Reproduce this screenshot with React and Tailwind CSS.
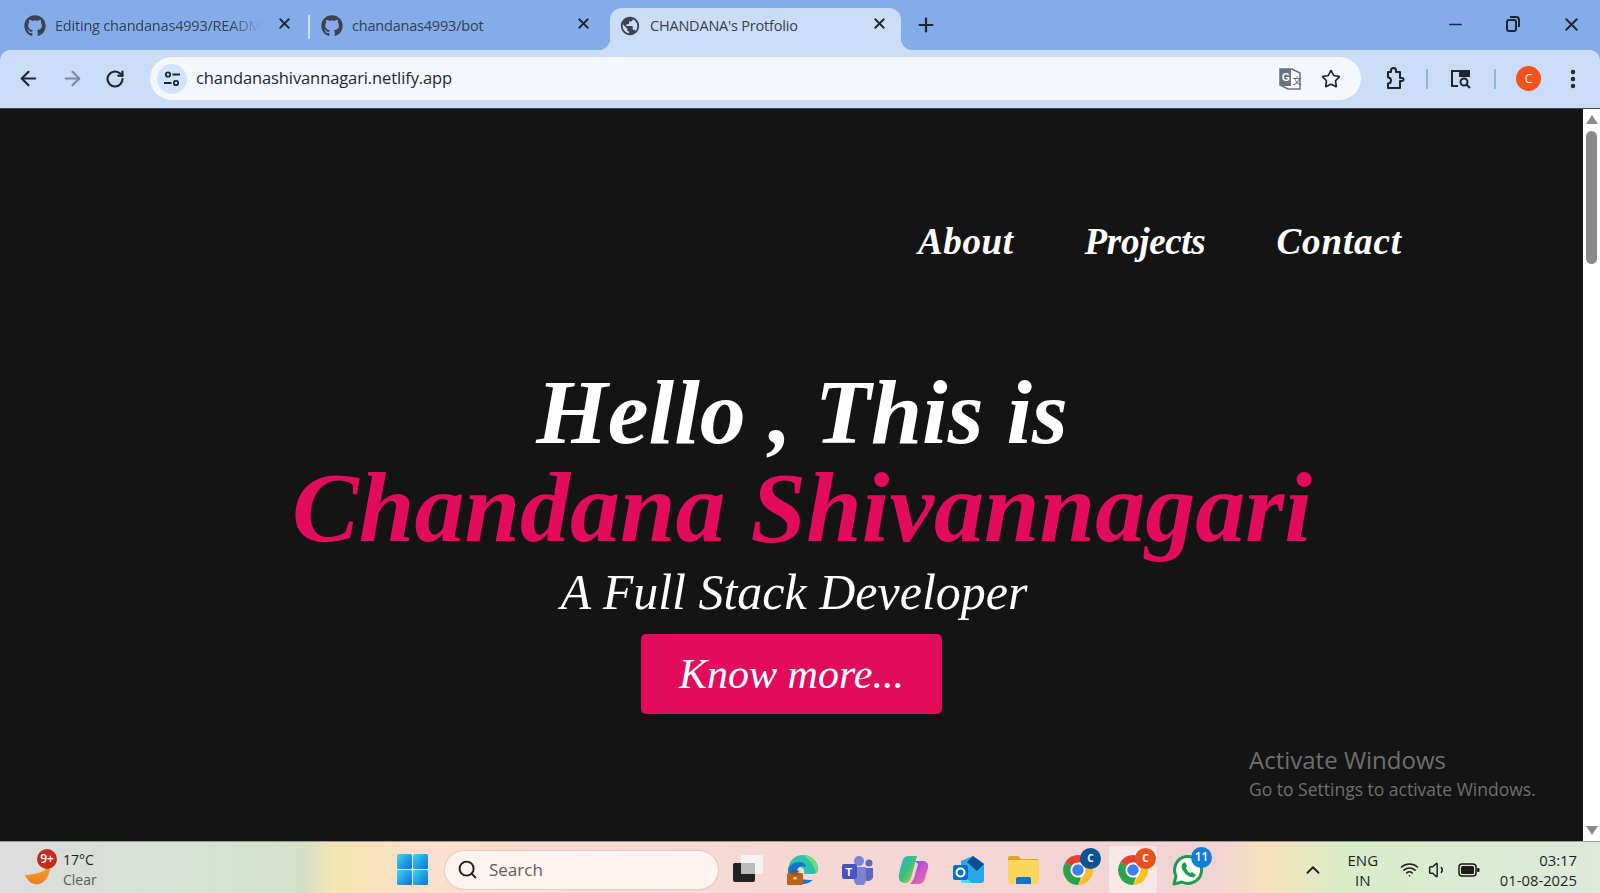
import React from "react";
import { FaGithub } from "react-icons/fa";
import { MdPublic } from "react-icons/md";
import {
  ArrowLeft,
  ArrowRight,
  ChevronUp,
  EllipsisVertical,
  Minus,
  Plus,
  RotateCw,
  Search,
  Star,
  Volume1,
  Wifi,
  X,
} from "lucide-react";

const Tab = ({ icon, title, active, fade, className }) => (
  <div
    className={`relative flex h-[42px] shrink-0 items-center pb-[6px] ${className} ${
      active ? "rounded-t-[12px] bg-[#cbdcf7]" : ""
    }`}
  >
    {active && (
      <>
        <span className="absolute bottom-0 left-[-12px] h-3 w-3 bg-[radial-gradient(circle_at_0_0,transparent_12px,#cbdcf7_12.5px)]" />
        <span className="absolute bottom-0 right-[-12px] h-3 w-3 bg-[radial-gradient(circle_at_100%_0,transparent_12px,#cbdcf7_12.5px)]" />
      </>
    )}
    <span className="flex w-[31px] shrink-0 justify-start text-[#3b4350]">{icon}</span>
    <span
      className={`w-[206px] overflow-hidden whitespace-nowrap text-[14.5px] tracking-[-0.2px] text-[#37404d] ${
        fade ? "[mask-image:linear-gradient(90deg,#000_85%,transparent)]" : ""
      }`}
    >
      {title}
    </span>
    <X className="absolute right-[13px] top-[7px] h-[17px] w-[17px] text-[#20262e]" strokeWidth={2.6} />
  </div>
);

const ExtensionIcon = () => (
  <svg width="24" height="24" viewBox="0 0 24 24" fill="none" stroke="#1f2530" strokeWidth="2">
    <path d="M6 5h3V3.500a2.500 2.500 0 0 1 5 0V5h4v6h2a1.500 1.500 0 0 1 0 3h-2v7H6v-4.500a3 3 0 0 0 0-6z" strokeLinejoin="round" />
  </svg>
);

const SidePanelIcon = () => (
  <svg width="24" height="24" viewBox="0 0 24 24" fill="none" stroke="#1f2530" strokeWidth="2">
    <path d="M10 19H4V4h17v6" />
    <rect x="12" y="4" width="9" height="5" fill="#1f2530" />
    <circle cx="16" cy="15" r="3.500" />
    <path d="M18.500 17.500L22 21" />
  </svg>
);

const TranslateIcon = () => (
  <svg width="24" height="24" viewBox="0 0 24 24">
    <path d="M2 2h12l8 4v16H10L2 18z" fill="#fff" stroke="#6b7280" strokeWidth="1.500" />
    <path d="M2 2h11v17H2z" fill="#6b7280" />
    <text x="4" y="14" fontSize="10" fontWeight="700" fill="#fff" fontFamily="Liberation Sans, sans-serif">G</text>
    <text x="14.500" y="17" fontSize="9" fill="#4b5563" fontFamily="Noto Sans CJK SC, sans-serif">文</text>
  </svg>
);

const WindowsLogo = () => (
  <svg width="31" height="31" viewBox="0 0 31 31">
    <defs>
      <linearGradient id="win" x1="0" y1="0" x2="1" y2="1">
        <stop offset="0" stopColor="#3fd0f5" />
        <stop offset="1" stopColor="#0a74cf" />
      </linearGradient>
    </defs>
    <rect x="0" y="0" width="15" height="15" rx="1.500" fill="url(#win)" />
    <rect x="16" y="0" width="15" height="15" rx="1.500" fill="url(#win)" />
    <rect x="0" y="16" width="15" height="15" rx="1.500" fill="url(#win)" />
    <rect x="16" y="16" width="15" height="15" rx="1.500" fill="url(#win)" />
  </svg>
);

const TaskView = () => (
  <svg width="31" height="30" viewBox="0 0 31 30">
    <rect x="8" y="0" width="22" height="19" rx="2" fill="#f4f4f4" />
    <rect x="0" y="8" width="22" height="19" rx="2" fill="#222" />
    <rect x="8" y="8" width="14" height="11" fill="#bcbcbc" />
  </svg>
);

const Edge = () => (
  <svg width="32" height="32" viewBox="0 0 32 32">
    <path d="M1 17C1 7 8 1 16 1c8 0 15 6 15 14 0 3-2 5-6 5h-8c1-4-1-7-5-7-6 0-9 4-11 4z" fill="#2fc0b0" />
    <path d="M16 1c8 0 15 6 15 14 0 2-1 3-2 4-1-7-6-13-13-18z" fill="#6fdc72" />
    <path d="M1 17c0-5 5-9 11-9 4 0 7 2 7 5-6-2-9 1-9 5 0 5 5 8 12 8 3 0 4 0 5-1-3 3-7 5-11 5C8 30 1 25 1 17z" fill="#1276c9" />
    <rect x="0" y="19" width="16" height="12" rx="1.500" fill="#b8651a" />
    <rect x="5" y="17" width="6" height="3" fill="none" stroke="#8a4a12" strokeWidth="1.200" />
    <rect x="6.500" y="23" width="3" height="2.500" fill="#f6d188" />
  </svg>
);

const Teams = () => (
  <svg width="32" height="30" viewBox="0 0 32 30">
    <circle cx="17" cy="6" r="5" fill="#7b83d6" />
    <circle cx="27" cy="8" r="3.500" fill="#5f66bd" />
    <path d="M23 13h8v9a5 5 0 0 1-8 3z" fill="#5f66bd" />
    <path d="M9 12h15v12a6 6 0 0 1-12 2z" fill="#7b83d6" />
    <rect x="0" y="9" width="15" height="15" rx="2" fill="#4b53bc" />
    <text x="3.500" y="21" fontSize="11" fontWeight="700" fill="#fff" fontFamily="Liberation Sans, sans-serif">T</text>
  </svg>
);

const Copilot = () => (
  <svg width="31" height="30" viewBox="0 0 31 30">
    <defs>
      <linearGradient id="cpa" x1="0" y1="0" x2="1" y2="1">
        <stop offset="0" stopColor="#2fb3e6" />
        <stop offset="0.5" stopColor="#36c07a" />
        <stop offset="1" stopColor="#f4c43a" />
      </linearGradient>
      <linearGradient id="cpb" x1="0" y1="0" x2="1" y2="1">
        <stop offset="0" stopColor="#5a55e0" />
        <stop offset="0.6" stopColor="#d85bc7" />
        <stop offset="1" stopColor="#f47a50" />
      </linearGradient>
    </defs>
    <path d="M10 1h9l-6 22c-1 3-3 5-6 5-5 0-7-4-6-9L4 7c1-4 3-6 6-6z" fill="url(#cpa)" />
    <path d="M17 6h8c4 0 6 3 5 7l-3 10c-1 4-3 6-7 6h-8c2-2 3-4 4-6l4-14z" fill="url(#cpb)" />
  </svg>
);

const Outlook = () => (
  <svg width="31" height="28" viewBox="0 0 31 28">
    <path d="M8 5l12-5 11 8v16a3 3 0 0 1-3 3H11a3 3 0 0 1-3-3z" fill="#28a8ea" />
    <path d="M14 6l6-6 11 8-7 7z" fill="#0a4f8f" />
    <path d="M8 17l11 10H11a3 3 0 0 1-3-3z" fill="#50d9ff" />
    <rect x="0" y="9" width="15" height="15" rx="2" fill="#0f6fc6" />
    <circle cx="7.500" cy="16.500" r="4" fill="none" stroke="#fff" strokeWidth="2" />
  </svg>
);

const Explorer = () => (
  <svg width="31" height="28" viewBox="0 0 31 28">
    <path d="M0 2a2 2 0 0 1 2-2h8l3 3h16a2 2 0 0 1 2 2v3H0z" fill="#e0a526" />
    <path d="M0 4h31v22a2 2 0 0 1-2 2H2a2 2 0 0 1-2-2z" fill="#fbd65a" />
    <path d="M8 28v-5a2 2 0 0 1 2-2h11a2 2 0 0 1 2 2v5z" fill="#1275c4" />
  </svg>
);

const Chrome = ({ badge, letter }) => (
  <div className="relative h-[32px] w-[32px]">
    <svg width="32" height="32" viewBox="0 0 32 32">
      <path d="M16 1a15 15 0 0 1 13 7.500H16a7.500 7.500 0 0 0-6.500 3.750L3.500 8A15 15 0 0 1 16 1z" fill="#e5402f" />
      <path d="M29 8.500A15 15 0 0 1 16 31l6.500-11.250A7.500 7.500 0 0 0 22.500 12z" fill="#f7c125" />
      <path d="M3.500 8l6 4.250a7.500 7.500 0 0 0 6.500 11.250h3L16 31A15 15 0 0 1 3.500 8z" fill="#2ba24c" />
      <circle cx="16" cy="16" r="6.500" fill="#3f82ee" stroke="#fff" strokeWidth="1.500" />
    </svg>
    <span
      className={`absolute right-[-7px] top-[-6px] flex h-[21px] w-[21px] items-center justify-center rounded-full text-[10px] font-bold text-white ${badge}`}
    >
      {letter}
    </span>
  </div>
);

const WhatsApp = () => (
  <div className="relative h-[32px] w-[32px]">
    <svg width="32" height="32" viewBox="0 0 32 32" fill="none">
      <path d="M2 30l2-8A13.500 13.500 0 1 1 10 28z" stroke="#1b9e4b" strokeWidth="3" strokeLinejoin="round" fill="#fff" />
      <path d="M11 9c-2 2-2 5 1 9s7 6 10 5l2-2-4-3-2 1c-2-1-3-3-4-5l1-2-2-4z" fill="#1b9e4b" />
    </svg>
    <span className="absolute right-[-8px] top-[-7px] flex h-[21px] w-[21px] items-center justify-center rounded-full bg-[#0f7fd6] text-[12px] font-semibold text-white">
      11
    </span>
  </div>
);

const BatteryIcon = () => (
  <svg width="22" height="14" viewBox="0 0 22 14">
    <rect x="1" y="1" width="17" height="12" rx="3" fill="none" stroke="#1a1a1a" strokeWidth="1.500" />
    <rect x="3" y="3" width="13" height="8" rx="1.500" fill="#1a1a1a" />
    <rect x="19" y="5" width="2.500" height="4" rx="1" fill="#1a1a1a" />
  </svg>
);

const Slot = ({ children }) => (
  <div className="relative flex h-[32px] w-[32px] items-center justify-center">{children}</div>
);

export default function App() {
  return (
    <div className="flex h-[893px] w-[1600px] flex-col overflow-hidden bg-[#84ace9] font-['Open_Sans',sans-serif]">
      {/* Tab strip */}
      <div className="flex h-[50px] shrink-0 items-end bg-[#84ace9] pl-[24px]">
        <Tab icon={<FaGithub size={22} />} title="Editing chandanas4993/README.md" className="w-[282px]" fade />
        <span className="mb-[11px] ml-[2px] mr-[11px] h-[24px] w-[2px] self-end bg-[#cbdcf7]" />
        <Tab icon={<FaGithub size={22} />} title="chandanas4993/bot" className="w-[284px]" />
        <div className="w-[5px]" />
        <Tab icon={<MdPublic size={22} />} title="CHANDANA's Protfolio" className="w-[291px] pl-[9px]" active />
        <Plus className="mb-[14px] ml-[14px] h-[22px] w-[22px] self-end text-[#20262e]" strokeWidth={2.4} />
        <div className="ml-auto flex h-full items-center gap-[39px] pb-[2px] pr-[18px] text-[#20262e]">
          <Minus className="h-[19px] w-[19px]" strokeWidth={2.2} />
          <svg width="18" height="18" viewBox="0 0 18 18" fill="none" stroke="#20262e" strokeWidth="2">
            <rect x="3" y="5" width="9" height="11" rx="2" />
            <path d="M6 2h6a3 3 0 0 1 3 3v7" />
          </svg>
          <X className="h-[21px] w-[21px]" strokeWidth={2.2} />
        </div>
      </div>

      {/* Toolbar */}
      <div className="flex h-[59px] shrink-0 items-center rounded-tl-[10px] rounded-tr-[10px] border-b border-b-[#3f4a5a] bg-[#cbdcf7] pb-[1px]">
        <div className="flex w-[150px] shrink-0 items-center gap-[21px] pl-[17px] text-[#20262e]">
          <ArrowLeft className="h-[23px] w-[23px]" strokeWidth={2.2} />
          <ArrowRight className="h-[23px] w-[23px] text-[#7b8aa0]" strokeWidth={2.2} />
          <RotateCw className="h-[20px] w-[20px]" strokeWidth={2.6} />
        </div>
        <div className="flex h-[43px] w-[1211px] shrink-0 items-center rounded-full bg-[#f4f8fd] pl-[7px] pr-[20px]">
          <span className="flex h-[30px] w-[30px] items-center justify-center rounded-full bg-[#d3e3fd]">
            <svg width="18" height="18" viewBox="0 0 18 18" fill="none" stroke="#20262e" strokeWidth="1.800">
              <circle cx="5" cy="4.500" r="2.200" />
              <path d="M9.500 4.500H17M1 13h7.500" />
              <circle cx="13" cy="13" r="2.200" />
            </svg>
          </span>
          <span className="ml-[9px] text-[16.5px] tracking-[-0.1px] text-[#1f2530]">chandanashivannagari.netlify.app</span>
          <span className="ml-auto flex items-center gap-[19px]">
            <TranslateIcon />
            <Star className="h-[20px] w-[20px] text-[#20262e]" strokeWidth={2} />
          </span>
        </div>
        <div className="ml-[21px] flex items-center">
          <ExtensionIcon />
          <span className="mx-[20px] h-5 w-[2px] bg-[#8fb4ea]" />
          <SidePanelIcon />
          <span className="ml-[22px] mr-[20px] h-5 w-[2px] bg-[#8fb4ea]" />
          <span className="flex h-[25px] w-[25px] items-center justify-center rounded-full bg-[#f4511e] text-[12px] text-white">
            C
          </span>
          <EllipsisVertical className="ml-[20px] h-[24px] w-[24px] text-[#20262e]" strokeWidth={2.4} />
        </div>
      </div>

      {/* Page */}
      <div className="relative flex min-h-0 flex-1">
        <main className="flex flex-1 flex-col bg-[#141414] font-['Liberation_Serif',serif] italic text-white">
          <nav className="flex justify-end gap-[71px] pr-[181px] pt-[108px] text-[37px] font-bold leading-[50px]">
            <a className="tracking-[0.6px]">About</a>
            <a className="tracking-[-0.3px]">Projects</a>
            <a className="tracking-[0.9px]">Contact</a>
          </nav>
          <section className="mt-[98px] flex flex-col items-center">
            <h1 className="pl-[21px] text-[92px] font-bold leading-[95px]">Hello , This is</h1>
            <h2 className="pl-[21px] text-[100px] font-bold leading-[95px] text-[#e30b5c]">Chandana Shivannagari</h2>
            <p className="mt-[3px] pl-[5px] text-[50px] font-medium leading-[68px]">A Full Stack Developer</p>
            <button className="mt-[8px] flex h-[80px] w-[301px] items-center justify-center rounded-[5px] bg-[#e30b5c] text-[42px]">
              Know more...
            </button>
          </section>
        </main>

        {/* Scrollbar */}
        <div className="flex w-[17px] shrink-0 flex-col items-center bg-white py-[6px]">
          <span className="h-0 w-0 border-x-[6px] border-b-[9px] border-x-transparent border-b-[#8a8a8a]" />
          <span className="mt-[7px] h-[133px] w-[11px] rounded-full bg-[#8a8a8a]" />
          <span className="mt-auto h-0 w-0 border-x-[6px] border-t-[9px] border-x-transparent border-t-[#8a8a8a]" />
        </div>

        {/* Watermark */}
        <div className="absolute left-[1249px] top-[635px] font-['Open_Sans',sans-serif] text-[#6f6f6f]">
          <div className="text-[24px] leading-[32px]">Activate Windows</div>
          <div className="text-[17.5px] leading-[26px]">Go to Settings to activate Windows.</div>
        </div>
      </div>

      {/* Taskbar */}
      <div className="flex h-[52px] shrink-0 items-center border-t border-t-[#9a9a9a] bg-[linear-gradient(90deg,#dcdcdc_0%,#d4e2d2_14%,#d6dfc8_19%,#f5e6b0_21%,#fbdfcf_27%,#f5d8d4_50%,#f0d3d3_76%,#f6e2bc_79%,#d9ecc9_84%,#dfe9dc_100%)] pt-[4px]">
        <div className="relative flex w-[445px] shrink-0 items-center pl-[24px]">
          <svg width="32" height="32" viewBox="0 0 32 32">
            <defs>
              <linearGradient id="moon" x1="0" y1="0" x2="0" y2="1">
                <stop offset="0" stopColor="#f9b92e" />
                <stop offset="1" stopColor="#ee7a1f" />
              </linearGradient>
            </defs>
            <path d="M25 3c2 9-3 17-24 18 3 7 8 10 14 9 9-2 14-16 10-27z" fill="url(#moon)" />
          </svg>
          <span className="absolute left-[37px] top-[-1px] flex h-[20px] w-[20px] items-center justify-center rounded-full bg-[#c42b1c] text-[12px] font-semibold text-white">
            9+
          </span>
          <div className="ml-[7px] text-[14px] leading-[20px]">
            <div className="text-[#1f1f1f]">17°C</div>
            <div className="text-[#5c5c5c]">Clear</div>
          </div>
          <span className="absolute left-[397px]">
            <WindowsLogo />
          </span>
        </div>
        <div className="flex h-[38px] w-[273px] shrink-0 items-center rounded-full bg-[#fdf3ef] pl-[12px] shadow-[0_0_2px_rgba(0,0,0,0.25)]">
          <Search className="h-[21px] w-[21px] text-[#1f1f1f]" strokeWidth={2.2} />
          <span className="ml-[11px] text-[17px] text-[#5c5c5c]">Search</span>
        </div>
        <div className="ml-[14px] flex items-center gap-[23px]">
          <Slot><TaskView /></Slot>
          <Slot><Edge /></Slot>
          <Slot><Teams /></Slot>
          <Slot><Copilot /></Slot>
          <Slot><Outlook /></Slot>
          <Slot><Explorer /></Slot>
          <Slot>
            <Chrome badge="bg-[#0b5394]" letter="C" />
            <span className="absolute bottom-[-10px] left-[12px] h-[3px] w-[8px] rounded-full bg-[#7a7a7a]" />
          </Slot>
          <Slot>
            <span className="absolute left-[-8px] top-[-8px] h-[48px] w-[48px] rounded-[4px] bg-[#f6e8e6]" />
            <Chrome badge="bg-[#e8501f]" letter="C" />
            <span className="absolute bottom-[-10px] left-[6px] h-[3px] w-[20px] rounded-full bg-[#0f6cbd]" />
          </Slot>
          <Slot>
            <WhatsApp />
            <span className="absolute bottom-[-10px] left-[12px] h-[3px] w-[8px] rounded-full bg-[#7a7a7a]" />
          </Slot>
        </div>
        <div className="ml-auto flex items-center pr-[23px] text-[#1f1f1f]">
          <ChevronUp className="h-[22px] w-[22px]" strokeWidth={2} />
          <div className="ml-[14px] w-[50px] text-center text-[15px] leading-[20px]">
            <div>ENG</div>
            <div>IN</div>
          </div>
          <Wifi className="ml-[12px] h-[19px] w-[19px]" strokeWidth={2} />
          <Volume1 className="ml-[9px] h-[20px] w-[20px]" strokeWidth={1.8} />
          <span className="ml-[10px]">
            <BatteryIcon />
          </span>
          <div className="ml-[20px] text-right text-[14.8px] leading-[20px]">
            <div>03:17</div>
            <div>01-08-2025</div>
          </div>
        </div>
      </div>
    </div>
  );
}
